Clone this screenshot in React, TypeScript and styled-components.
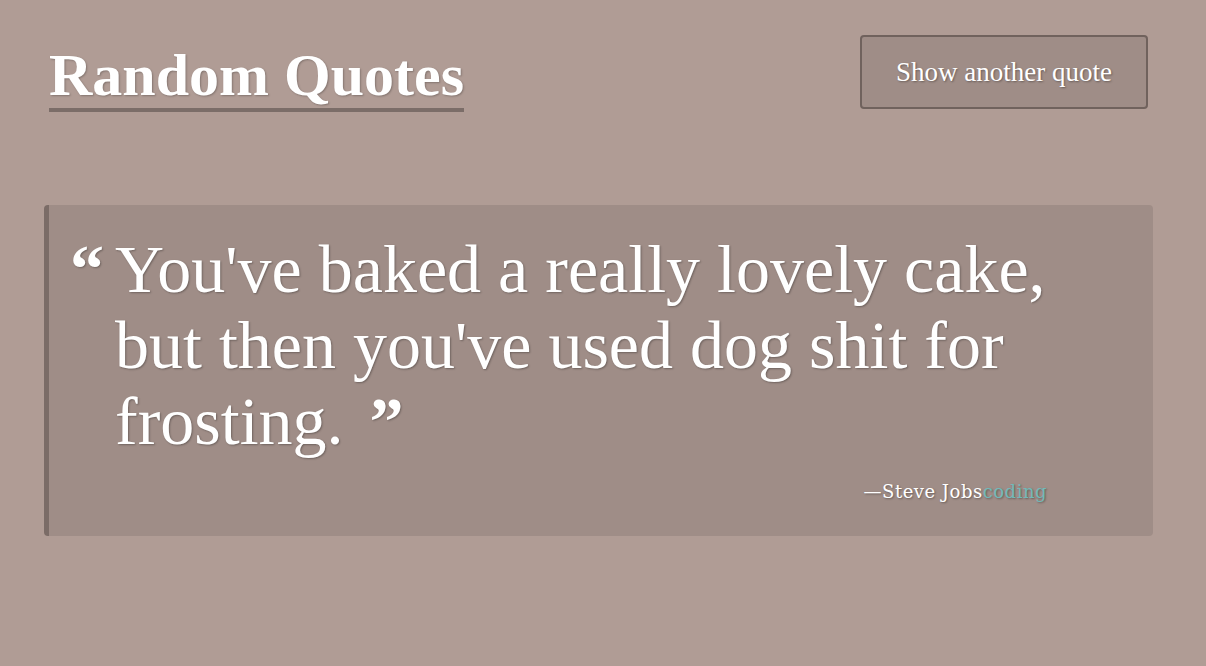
import React from "react";
import styled, { createGlobalStyle } from "styled-components";

const GlobalStyle = createGlobalStyle`
  html, body {
    margin: 0;
    padding: 0;
    background: #b09c95;
  }
  body {
    font-family: "Liberation Serif", "DejaVu Serif", serif;
    color: #ffffff;
  }
`;

const Page = styled.div`
  width: 1109px;
  padding: 35px 0 0 44px;
`;

const Header = styled.header`
  display: flex;
  justify-content: space-between;
  align-items: flex-start;
  padding: 0 5px 0 5px;
`;

const Title = styled.h1`
  margin: 0;
  padding-top: 8px;
  font-size: 60px;
  line-height: 65px;
  font-weight: 700;
  color: #ffffff;
  text-shadow: 1px 1px 2px rgba(0, 0, 0, 0.25);
  border-bottom: 4px solid #7b6d68;
`;

const Button = styled.button`
  width: 288px;
  height: 74px;
  background: #9f8d87;
  border: 2px solid #70625d;
  border-radius: 4px;
  color: #ffffff;
  font-family: inherit;
  font-size: 27px;
  text-shadow: 1px 1px 2px rgba(0, 0, 0, 0.35);
  cursor: pointer;
`;

const Card = styled.blockquote`
  margin: 93px 0 0 0;
  box-sizing: border-box;
  height: 331px;
  background: #9f8d87;
  border-left: 5px solid #7b6c67;
  border-radius: 4px;
  padding: 26px 78px 0 21px;
`;

const QuoteText = styled.p`
  margin: 0;
  padding-left: 45px;
  text-indent: -45px;
  font-size: 68px;
  line-height: 76px;
  color: #ffffff;
  text-shadow: 1px 1px 2px rgba(0, 0, 0, 0.3);
`;

const LastLine = styled.span`
  white-space: nowrap;
`;

const Mark = styled.span<{ $open?: boolean }>`
  display: ${(p) => (p.$open ? "inline-block" : "inline")};
  width: ${(p) => (p.$open ? "45px" : "auto")};
  margin-left: ${(p) => (p.$open ? "0" : "26px")};
  text-indent: 0;
  font-weight: 700;
`;

const Author = styled.footer`
  margin: 22px 28px 0 0;
  text-align: right;
  font-family: "DejaVu Serif", serif;
  font-size: 18px;
  letter-spacing: 0.5px;
  color: #ffffff;
  text-shadow: 1px 1px 2px rgba(0, 0, 0, 0.35);
`;

const Tag = styled.span`
  color: #72b9b8;
`;

export default function App() {
  return (
    <>
      <GlobalStyle />
      <Page>
        <Header>
          <Title>Random Quotes</Title>
          <Button>Show another quote</Button>
        </Header>
        <Card>
          <QuoteText>
            <Mark $open>“</Mark>You've baked a really lovely cake, but then you've used dog shit for{" "}
            <LastLine>
              frosting.<Mark>”</Mark>
            </LastLine>
          </QuoteText>
          <Author>
            —Steve Jobs<Tag>coding</Tag>
          </Author>
        </Card>
      </Page>
    </>
  );
}
